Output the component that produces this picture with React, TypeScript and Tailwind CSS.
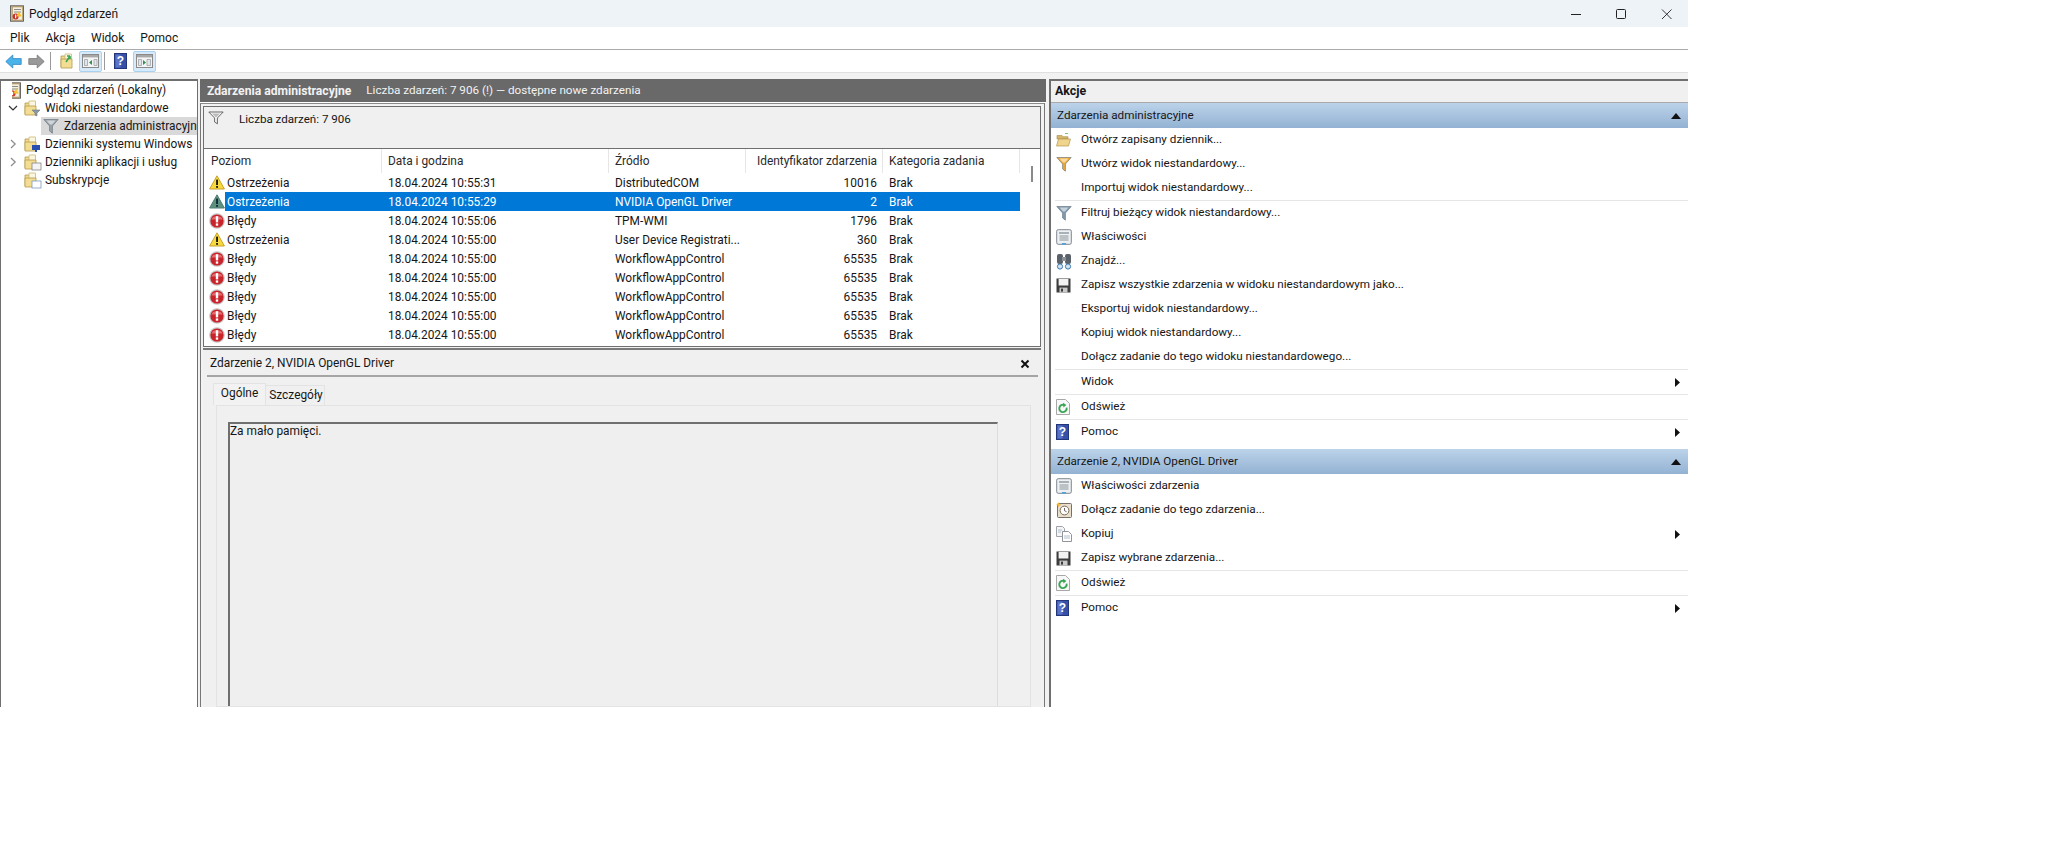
import React from 'react';

const FONT = "font-['Roboto','Liberation_Sans',sans-serif]";

const Warning = ({ selected = false }: { selected?: boolean }) => (
  <svg width="16" height="15" viewBox="0 0 16 15" className="shrink-0">
    <path d="M8 .8 15.4 14H.6Z" fill={selected ? '#5f8f7d' : '#f8d93c'} stroke={selected ? '#4f7f76' : '#c8a22a'} strokeWidth="1" strokeLinejoin="round" />
    <rect x="7.1" y="4.6" width="1.9" height="5.4" fill={selected ? '#0b2a3a' : '#1a1a1a'} />
    <rect x="7.1" y="11" width="1.9" height="1.8" fill={selected ? '#0b2a3a' : '#1a1a1a'} />
  </svg>
);

const ErrorIcon = () => (
  <svg width="16" height="16" viewBox="0 0 16 16" className="shrink-0">
    <circle cx="8" cy="8" r="7.8" fill="#c4c4c4" />
    <circle cx="8" cy="8" r="6.6" fill="#c9242b" />
    <path d="M2.4 6.4a5.8 4.4 0 0 1 11.2 0Z" fill="#e56b70" />
    <rect x="6.8" y="3.2" width="2.4" height="6.2" fill="#fff" />
    <rect x="6.8" y="10.4" width="2.4" height="2.3" fill="#fff" />
  </svg>
);

const Funnel = ({ color = '#9aa3ab', size = 16 }: { color?: string; size?: number }) => (
  <svg width={size} height={size} viewBox="0 0 16 16" className="shrink-0">
    <path d="M.8 1.5h14.4L9.4 8v7.2L6.6 13V8Z" fill={color} stroke="#5f6b75" strokeWidth=".6" />
    <path d="M3.5 2.5h9L9 6.5H7Z" fill="#fff" opacity=".55" />
  </svg>
);

const OutlineFunnel = () => (
  <svg width="16" height="14" viewBox="0 0 16 14" className="shrink-0">
    <path d="M.8 1h14.4L9.4 7v5.8L6.6 11V7Z" fill="#f6f6f6" stroke="#5a5a5a" strokeWidth=".9" />
    <path d="M4 2.4h8L8.6 6H7.4Z" fill="#bdbdbd" />
  </svg>
);

const Folder = ({ badge }: { badge?: React.ReactNode }) => (
  <svg width="18" height="17" viewBox="0 0 18 17" className="shrink-0">
    <path d="M1 3h5l1-1.6h4V14H1Z" fill="#f0d98c" stroke="#b59a4f" strokeWidth=".8" />
    <path d="M5 1h6.5v12H5Z" fill="#fbf6df" stroke="#c9b877" strokeWidth=".7" />
    <path d="M1 6h11v9H1Z" fill="#f3dd92" stroke="#b59a4f" strokeWidth=".8" />
    {badge}
  </svg>
);

const EventLogIcon = () => (
  <svg width="16" height="17" viewBox="0 0 16 17" className="shrink-0">
    <rect x="1.5" y=".8" width="13" height="15.4" fill="#d9b679" stroke="#5a5a5a" strokeWidth=".9" />
    <rect x="3.6" y="2" width="9.6" height="13" fill="#f5efe0" stroke="#9a8a60" strokeWidth=".5" />
    <path d="M5 4.5h7M5 7h7" stroke="#808080" strokeWidth=".9" />
    <circle cx="6.6" cy="11.4" r="3" fill="#c9302c" />
    <rect x="6" y="9.6" width="1.2" height="3.6" fill="#fff" />
    <path d="M10 6.5l2.8 5H7.2Z" fill="#f4c430" />
  </svg>
);

const Chevron = ({ open }: { open?: boolean }) => (
  <svg width="10" height="10" viewBox="0 0 10 10" className="shrink-0">
    {open ? (
      <path d="M1 3 5 7 9 3" fill="none" stroke="#333" strokeWidth="1.2" />
    ) : (
      <path d="M3 1 7.2 5 3 9" fill="none" stroke="#8a8a8a" strokeWidth="1.2" />
    )}
  </svg>
);

const HelpIcon = ({ h = 16 }: { h?: number }) => (
  <svg width="13" height={h} viewBox="0 0 13 16" className="shrink-0">
    <rect x=".5" y=".5" width="12" height="15" fill="#3650a8" stroke="#23367c" />
    <rect x="1.5" y="1.5" width="5" height="13" fill="#5a74c8" />
    <text x="6.5" y="12.4" textAnchor="middle" fontSize="12" fontWeight="700" fill="#fff" fontFamily="Liberation Sans">?</text>
  </svg>
);

const PropsIcon = () => (
  <svg width="16" height="16" viewBox="0 0 16 16" className="shrink-0">
    <rect x=".7" y=".7" width="14.6" height="14.6" rx="1.5" fill="#eef0f2" stroke="#808890" />
    <rect x="3" y="3" width="10" height="2" fill="#a9b1b8" />
    <path d="M3.5 7h9M3.5 9h9M3.5 11h9" stroke="#7f8890" strokeWidth=".9" />
    <rect x="6" y="14" width="4" height="1.6" fill="#4aa3df" />
  </svg>
);

const Binoculars = () => (
  <svg width="16" height="17" viewBox="0 0 16 17" className="shrink-0">
    <rect x="1" y="1" width="6" height="10" rx="2" fill="#5a6168" />
    <rect x="9" y="1" width="6" height="10" rx="2" fill="#5a6168" />
    <rect x="6" y="4" width="4" height="4" fill="#8a9198" />
    <circle cx="4" cy="13.5" r="2.6" fill="#cfe3f2" stroke="#3a7ab0" />
    <circle cx="12" cy="13.5" r="2.6" fill="#cfe3f2" stroke="#3a7ab0" />
  </svg>
);

const Disk = () => (
  <svg width="15" height="15" viewBox="0 0 15 15" className="shrink-0">
    <path d="M.5.5h14v14H.5Z" fill="#3c3c3c" />
    <rect x="2.6" y="1" width="9.8" height="6.5" fill="#f2f2f2" />
    <rect x="3.5" y="9.6" width="8" height="4.9" fill="#c9c9c9" />
    <rect x="5" y="10.6" width="2" height="3" fill="#3c3c3c" />
  </svg>
);

const RefreshIcon = () => (
  <svg width="14" height="16" viewBox="0 0 14 16" className="shrink-0">
    <path d="M.5.5h9l4 4v11H.5Z" fill="#f8f8f8" stroke="#a8a8a8" />
    <path d="M10.6 8.6A3.7 3.7 0 1 1 8.4 6" fill="none" stroke="#3aa655" strokeWidth="1.9" />
    <path d="M7 3.8l3.4 2.3L7.4 8.4Z" fill="#3aa655" />
  </svg>
);

const OpenFolder = () => (
  <svg width="15" height="14" viewBox="0 0 15 14" className="shrink-0">
    <path d="M1 2.5h5l1 1.2h5V6H1Z" fill="#d5b56a" stroke="#a88a45" strokeWidth=".6" />
    <path d="M.5 13 2.5 6h12l-2 7Z" fill="#efd48d" stroke="#b5964f" strokeWidth=".7" />
    <path d="M9 .5h3" stroke="#5cb85c" strokeWidth=".8" />
  </svg>
);

const AttachIcon = () => (
  <svg width="16" height="16" viewBox="0 0 16 16" className="shrink-0">
    <rect x="1.5" y="1.5" width="14" height="14" rx="1" fill="#e8dfcf" stroke="#77716a" />
    <circle cx="8.5" cy="8.5" r="4.4" fill="#fff" stroke="#7d6a4d" />
    <path d="M8.5 6v2.7l2 1" fill="none" stroke="#555" strokeWidth=".9" />
    <path d="M2.6 0 3.6 2l2 .6-2 .8L2.6 5.4 1.8 3.4 0 2.6 1.8 2Z" fill="#f4b942" />
  </svg>
);

const CopyIcon = () => (
  <svg width="16" height="16" viewBox="0 0 16 16" className="shrink-0">
    <path d="M.5.5h6l2 2v8h-8Z" fill="#f5f5f5" stroke="#a0a4a8" />
    <path d="M6.5 5.5h6l3 3v7h-9Z" fill="#fff" stroke="#8f959b" />
    <path d="M8 10h6M8 12h6M2 4h4M2 6h3" stroke="#9fb2c4" strokeWidth=".8" />
  </svg>
);

const Arrow = ({ dir, color, stroke }: { dir: 'l' | 'r'; color: string; stroke: string }) => (
  <svg width="17" height="15" viewBox="0 0 17 15" className="shrink-0">
    <path
      d={dir === 'l' ? 'M.8 7.5 7.8 1v3.6h8.4v5.8H7.8V14Z' : 'M16.2 7.5 9.2 1v3.6H.8v5.8h8.4V14Z'}
      fill={color}
      stroke={stroke}
      strokeWidth=".8"
    />
  </svg>
);

const PaneToggle = ({ side }: { side: 'l' | 'r' }) => (
  <div className="flex h-[21px] w-[23px] items-center justify-center rounded-[2px] border border-[#a9d2f0] bg-[#d6eafa]">
    <svg width="17" height="14" viewBox="0 0 17 14">
      <rect x=".5" y=".5" width="16" height="13" fill="#f4f4f4" stroke="#8a8a8a" />
      <rect x="1" y="1" width="15" height="2.4" fill="#a8a8a8" />
      {side === 'l' ? (
        <>
          <path d="M2.5 5.5h3v6h-3ZM12 5.5h3v6h-3Z" fill="#dfe7ee" stroke="#8a8a8a" strokeWidth=".6" />
          <path d="M10 6v5L7 8.5Z" fill="#2f8f4f" />
        </>
      ) : (
        <>
          <path d="M2.5 5.5h3v6h-3ZM11 5.5h3.5v6H11Z" fill="#dfe7ee" stroke="#8a8a8a" strokeWidth=".6" />
          <path d="M7 6v5l3-2.5Z" fill="#2f8f4f" />
        </>
      )}
    </svg>
  </div>
);

const Triangle = ({ dir }: { dir: 'up' | 'right' }) =>
  dir === 'up' ? (
    <svg width="10" height="6" viewBox="0 0 10 6"><path d="M5 0 10 6H0Z" fill="#111" /></svg>
  ) : (
    <svg width="5" height="9" viewBox="0 0 5 9"><path d="M0 0 5 4.5 0 9Z" fill="#111" /></svg>
  );

const rows = [
  { level: 'w', date: '18.04.2024 10:55:31', source: 'DistributedCOM', id: '10016' },
  { level: 'w', date: '18.04.2024 10:55:29', source: 'NVIDIA OpenGL Driver', id: '2', selected: true },
  { level: 'e', date: '18.04.2024 10:55:06', source: 'TPM-WMI', id: '1796' },
  { level: 'w', date: '18.04.2024 10:55:00', source: 'User Device Registrati...', id: '360' },
  { level: 'e', date: '18.04.2024 10:55:00', source: 'WorkflowAppControl', id: '65535' },
  { level: 'e', date: '18.04.2024 10:55:00', source: 'WorkflowAppControl', id: '65535' },
  { level: 'e', date: '18.04.2024 10:55:00', source: 'WorkflowAppControl', id: '65535' },
  { level: 'e', date: '18.04.2024 10:55:00', source: 'WorkflowAppControl', id: '65535' },
  { level: 'e', date: '18.04.2024 10:55:00', source: 'WorkflowAppControl', id: '65535' },
];

type Action = { label: string; icon?: React.ReactNode; sub?: boolean; sep?: boolean };

const adminActions: Action[] = [
  { label: 'Otwórz zapisany dziennik...', icon: <OpenFolder /> },
  { label: 'Utwórz widok niestandardowy...', icon: <Funnel color="#f0a830" /> },
  { label: 'Importuj widok niestandardowy...', sep: true },
  { label: 'Filtruj bieżący widok niestandardowy...', icon: <Funnel color="#7f9ab0" /> },
  { label: 'Właściwości', icon: <PropsIcon /> },
  { label: 'Znajdź...', icon: <Binoculars /> },
  { label: 'Zapisz wszystkie zdarzenia w widoku niestandardowym jako...', icon: <Disk /> },
  { label: 'Eksportuj widok niestandardowy...' },
  { label: 'Kopiuj widok niestandardowy...' },
  { label: 'Dołącz zadanie do tego widoku niestandardowego...', sep: true },
  { label: 'Widok', sub: true, sep: true },
  { label: 'Odśwież', icon: <RefreshIcon />, sep: true },
  { label: 'Pomoc', icon: <HelpIcon />, sub: true },
];

const eventActions: Action[] = [
  { label: 'Właściwości zdarzenia', icon: <PropsIcon /> },
  { label: 'Dołącz zadanie do tego zdarzenia...', icon: <AttachIcon /> },
  { label: 'Kopiuj', icon: <CopyIcon />, sub: true },
  { label: 'Zapisz wybrane zdarzenia...', icon: <Disk />, sep: true },
  { label: 'Odśwież', icon: <RefreshIcon />, sep: true },
  { label: 'Pomoc', icon: <HelpIcon />, sub: true },
];

const SectionHeader = ({ title }: { title: string }) => (
  <div className="flex h-[25px] items-center justify-between bg-gradient-to-b from-[#bcd3ea] to-[#93b2d3] pl-[6px] pr-[7px]">
    <span>{title}</span>
    <Triangle dir="up" />
  </div>
);

const ActionList = ({ items }: { items: Action[] }) => (
  <div className="flex flex-col">
    {items.map((a) => (
      <React.Fragment key={a.label}>
        <div className="flex h-[24px] items-center pl-[5px] pr-[8px]">
          <div className="flex w-[25px] items-center justify-start">{a.icon}</div>
          <span className="flex-1">{a.label}</span>
          {a.sub && <Triangle dir="right" />}
        </div>
        {a.sep && <div className="ml-[4px] h-px bg-[#e6e6e6]" />}
      </React.Fragment>
    ))}
  </div>
);

const TreeRow = ({ icon, label, pad, chevron, active }: { icon: React.ReactNode; label: string; pad: string; chevron?: React.ReactNode; active?: boolean }) => (
  <div className={`flex h-[18px] items-center whitespace-nowrap ${pad}`}>
    <div className="flex w-[11px] shrink-0 items-center">{chevron}</div>
    <div className={`flex h-[18px] min-w-0 flex-1 items-center gap-[2px] overflow-hidden ${active ? 'bg-[#d9d9d9]' : ''}`}>
      {icon}
      <span className="pt-[2px]">{label}</span>
    </div>
  </div>
);

export default function App() {
  return (
    <div className={`h-[864px] w-[2064px] overflow-hidden bg-white text-[11.9px] leading-none text-[#161616] ${FONT}`}>
      <div className="flex h-[707px] w-[1688px] flex-col">
        {/* title bar */}
        <div className="flex h-[27px] shrink-0 items-center bg-[#eef3f8] pl-[9px]">
          <EventLogIcon />
          <span className="ml-[4px] text-[12px]">Podgląd zdarzeń</span>
          <div className="ml-auto flex items-center">
            <svg width="120" height="14" viewBox="0 0 120 14" className="mr-px">
              <path d="M4 7.5h10" stroke="#222" strokeWidth="1" />
              <rect x="49.5" y="2.5" width="9" height="9" rx="1" fill="none" stroke="#222" />
              <path d="M95 2.5l9.5 9.5M104.5 2.5 95 12" stroke="#222" strokeWidth=".9" />
            </svg>
          </div>
        </div>

        {/* menu */}
        <div className="flex h-[23px] shrink-0 items-center gap-[16px] border-b border-[#aaaaaa] pl-[10px] text-[12px]">
          <span>Plik</span>
          <span>Akcja</span>
          <span>Widok</span>
          <span>Pomoc</span>
        </div>

        {/* toolbar */}
        <div className="flex h-[23px] shrink-0 items-center border-b border-[#e0e0e0] pl-[5px]">
          <Arrow dir="l" color="#4ab3ea" stroke="#2f86c4" />
          <div className="ml-[6px]"><Arrow dir="r" color="#9a9a9a" stroke="#777777" /></div>
          <div className="ml-[5px] h-[18px] w-px bg-[#9a9a9a]" />
          <div className="ml-[9px] mr-px">
            <Folder badge={<path d="M6 9 10 3M10 3H7M10 3v3" stroke="#3aa655" strokeWidth="1.6" fill="none" />} />
          </div>
          <PaneToggle side="l" />
          <div className="ml-[2px] h-[18px] w-px bg-[#9a9a9a]" />
          <div className="ml-[9px] mr-[6px]"><HelpIcon /></div>
          <PaneToggle side="r" />
        </div>

        {/* body */}
        <div className="flex min-h-0 flex-1 bg-[#f2f2f2] pt-[6px]">
          {/* tree */}
          <div className="w-[198px] shrink-0 overflow-hidden border-x border-t-2 border-x-[#6f6f6f] border-t-[#6f6f6f] bg-white">
            <TreeRow pad="" label="Podgląd zdarzeń (Lokalny)" icon={<div className="ml-[-6px] mr-[2px]"><EventLogIcon /></div>} />
            <TreeRow pad="pl-[7px]" label="Widoki niestandardowe" chevron={<Chevron open />} icon={<div className="ml-[5px] mr-px"><Folder badge={<path d="M8 10h8l-3 3v3l-2-1v-2Z" fill="#8c9aa6" stroke="#5f6b75" strokeWidth=".5" />} /></div>} />
            <TreeRow pad="pl-[29px]" label="Zdarzenia administracyjne" active icon={<div className="ml-[2px] mr-[3px]"><Funnel /></div>} />
            <TreeRow pad="pl-[7px]" label="Dzienniki systemu Windows" chevron={<Chevron />} icon={<div className="ml-[5px] mr-px"><Folder badge={<path d="M8 9h8v5H8ZM11 14h2v2h-2Z" fill="#2a4fb0" />} /></div>} />
            <TreeRow pad="pl-[7px]" label="Dzienniki aplikacji i usług" chevron={<Chevron />} icon={<div className="ml-[5px] mr-px"><Folder badge={<rect x="8" y="9" width="9" height="7" fill="#f4f4f4" stroke="#777" strokeWidth=".7" />} /></div>} />
            <TreeRow pad="pl-[7px]" label="Subskrypcje" icon={<div className="ml-[5px] mr-px"><Folder badge={<rect x="8" y="9" width="9" height="7" fill="#fff" stroke="#6b8db5" strokeWidth=".7" />} /></div>} />
          </div>

          {/* center */}
          <div className="ml-[2px] flex w-[846px] shrink-0 flex-col">
            <div className="flex h-[23px] shrink-0 items-center bg-[#696969] pl-[7px] pt-px text-[11.7px] text-[#f2f2f2]">
              <span className="text-[12.15px] font-bold">Zdarzenia administracyjne</span>
              <span className="ml-[15px]">Liczba zdarzeń: 7 906 (!) — dostępne nowe zdarzenia</span>
            </div>
            <div className="h-px shrink-0 bg-white" />
            <div className="mr-[1px] flex min-h-0 flex-1 flex-col border-x border-t border-x-[#777777] border-t-[#8a8a8a] pl-[2px] pr-[3px] pt-[2px]">
              {/* upper pane */}
              <div className="flex h-[241px] shrink-0 flex-col border border-[#6f6f6f]">
                <div className="flex h-[42px] shrink-0 items-start border-b border-[#6f6f6f] bg-[#f0f0f0] pl-[4px] pt-[4px]">
                  <OutlineFunnel />
                  <span className="ml-[15px] mt-[3px] text-[11.6px]">Liczba zdarzeń: 7 906</span>
                </div>
                <div className="relative min-h-0 flex-1 overflow-hidden bg-white">
                  <div className="flex h-[24px] w-[816px] items-center text-[#2a2a2a]">
                    <div className="flex h-[24px] w-[178px] items-center border-r border-[#e6e6e6] pl-[7px] pt-[2px]">Poziom</div>
                    <div className="flex h-[24px] w-[227px] items-center border-r border-[#e6e6e6] pl-[6px] pt-[2px]">Data i godzina</div>
                    <div className="flex h-[24px] w-[137px] items-center border-r border-[#e6e6e6] pl-[6px] pt-[2px]">Źródło</div>
                    <div className="flex h-[24px] w-[137px] items-center justify-end border-r border-[#e6e6e6] pr-[5px] pt-[2px]">Identyfikator zdarzenia</div>
                    <div className="flex h-[24px] w-[137px] items-center border-r border-[#e6e6e6] pl-[6px] pt-[2px]">Kategoria zadania</div>
                  </div>
                  {rows.map((r, i) => (
                    <div key={i} className="flex h-[19px] w-[816px] items-center">
                      <div className="flex w-[21px] shrink-0 justify-start pl-[5px]">
                        {r.level === 'w' ? <Warning selected={r.selected} /> : <ErrorIcon />}
                      </div>
                      <div className={`flex h-[19px] flex-1 items-center pt-[2px] ${r.selected ? 'bg-[#0078d7] text-white' : ''}`}>
                        <span className="w-[163px] shrink-0 pl-[2px]">{r.level === 'w' ? 'Ostrzeżenia' : 'Błędy'}</span>
                        <span className="w-[227px] shrink-0">{r.date}</span>
                        <span className="w-[137px] shrink-0 whitespace-nowrap">{r.source}</span>
                        <span className="w-[125px] shrink-0 text-right">{r.id}</span>
                        <span className="ml-[12px]">Brak</span>
                      </div>
                    </div>
                  ))}
                  <div className="absolute right-[7px] top-[17px] h-[16px] w-[2px] bg-[#8a8a8a]" />
                </div>
              </div>

              {/* lower pane */}
              <div className="mt-[1px] flex min-h-0 flex-1 flex-col border-t-2 border-[#7a7a7a] bg-[#f0f0f0] pl-[4px] pr-[3px]">
                <div className="flex h-[27px] shrink-0 items-center justify-between border-b-2 border-[#a5a5a5] pl-[3px] pr-[8px] pt-[2px]">
                  <span>Zdarzenie 2, NVIDIA OpenGL Driver</span>
                  <svg width="10" height="10" viewBox="0 0 10 10"><path d="M1.5 1.5l7 7M8.5 1.5l-7 7" stroke="#111" strokeWidth="2" /></svg>
                </div>
                <div className="flex flex-1 flex-col pl-[6px] pr-[7px] pt-[6px]">
                  <div className="flex h-[22px] shrink-0 items-end">
                    <div className="flex h-[22px] w-[53px] items-center justify-center border border-b-0 border-[#e3e3e3] bg-[#f2f2f2] pb-[2px]">Ogólne</div>
                    <div className="flex h-[20px] w-[59px] items-center justify-center border border-b-0 border-l-0 border-[#e3e3e3] pl-[2px]">Szczegóły</div>
                  </div>
                  <div className="ml-[3px] flex-1 border border-[#e3e3e3] pl-[11px] pr-[32px] pt-[16px]">
                    <div className="h-full border-l-2 border-t-2 border-r border-l-[#6f6f6f] border-t-[#6f6f6f] border-r-[#dcdcdc] bg-[#efefef] pt-[2px]">
                      Za mało pamięci.
                    </div>
                  </div>
                </div>
              </div>
            </div>
          </div>

          {/* actions */}
          <div className="ml-[3px] min-w-0 flex-1 overflow-hidden border-l-2 border-t-2 border-l-[#6f6f6f] border-t-[#6f6f6f] bg-white text-[11.7px]">
            <div className="flex h-[22px] items-center border-b border-[#aaaaaa] bg-[#f0f0f0] pl-[4px] text-[12.4px] font-bold">Akcje</div>
            <SectionHeader title="Zdarzenia administracyjne" />
            <ActionList items={adminActions} />
            <div className="h-[5px]" />
            <SectionHeader title="Zdarzenie 2, NVIDIA OpenGL Driver" />
            <ActionList items={eventActions} />
          </div>
        </div>
      </div>
    </div>
  );
}
